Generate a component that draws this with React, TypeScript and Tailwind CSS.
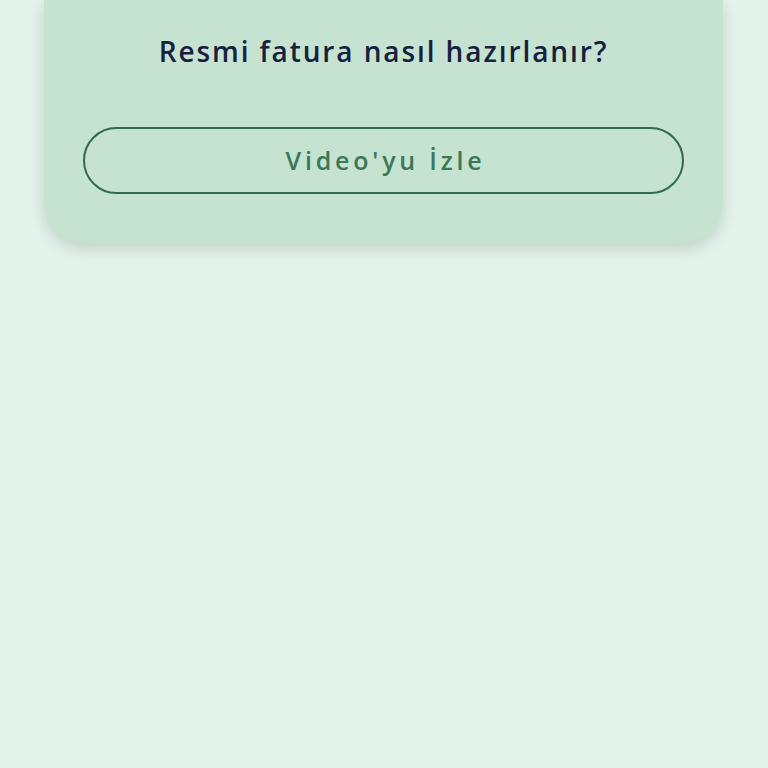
import React from "react";

export default function App() {
  return (
    <div className="w-[768px] h-[768px] bg-[#e3f2ea] overflow-hidden" style={{ fontFamily: '"Open Sans", "Noto Sans", sans-serif' }}>
      <div className="mx-[44px] w-[679px] bg-[#c6e3d2] rounded-b-[40px] shadow-[0_6px_14px_rgba(40,80,60,0.18)] pt-[33px] px-[39px] pb-[49px] flex flex-col items-center">
        <h1 className="text-[28px] leading-[36px] font-semibold text-[#17213f] tracking-[1.9px]">
          Resmi fatura nasıl hazırlanır?
        </h1>
        <button className="mt-[58px] w-full h-[67px] rounded-full border-[2px] border-[#2f6b4c] flex items-center justify-center text-[25px] font-semibold text-[#3a7858] tracking-[3.8px] pl-[4px]">
          Video'yu İzle
        </button>
      </div>
    </div>
  );
}
